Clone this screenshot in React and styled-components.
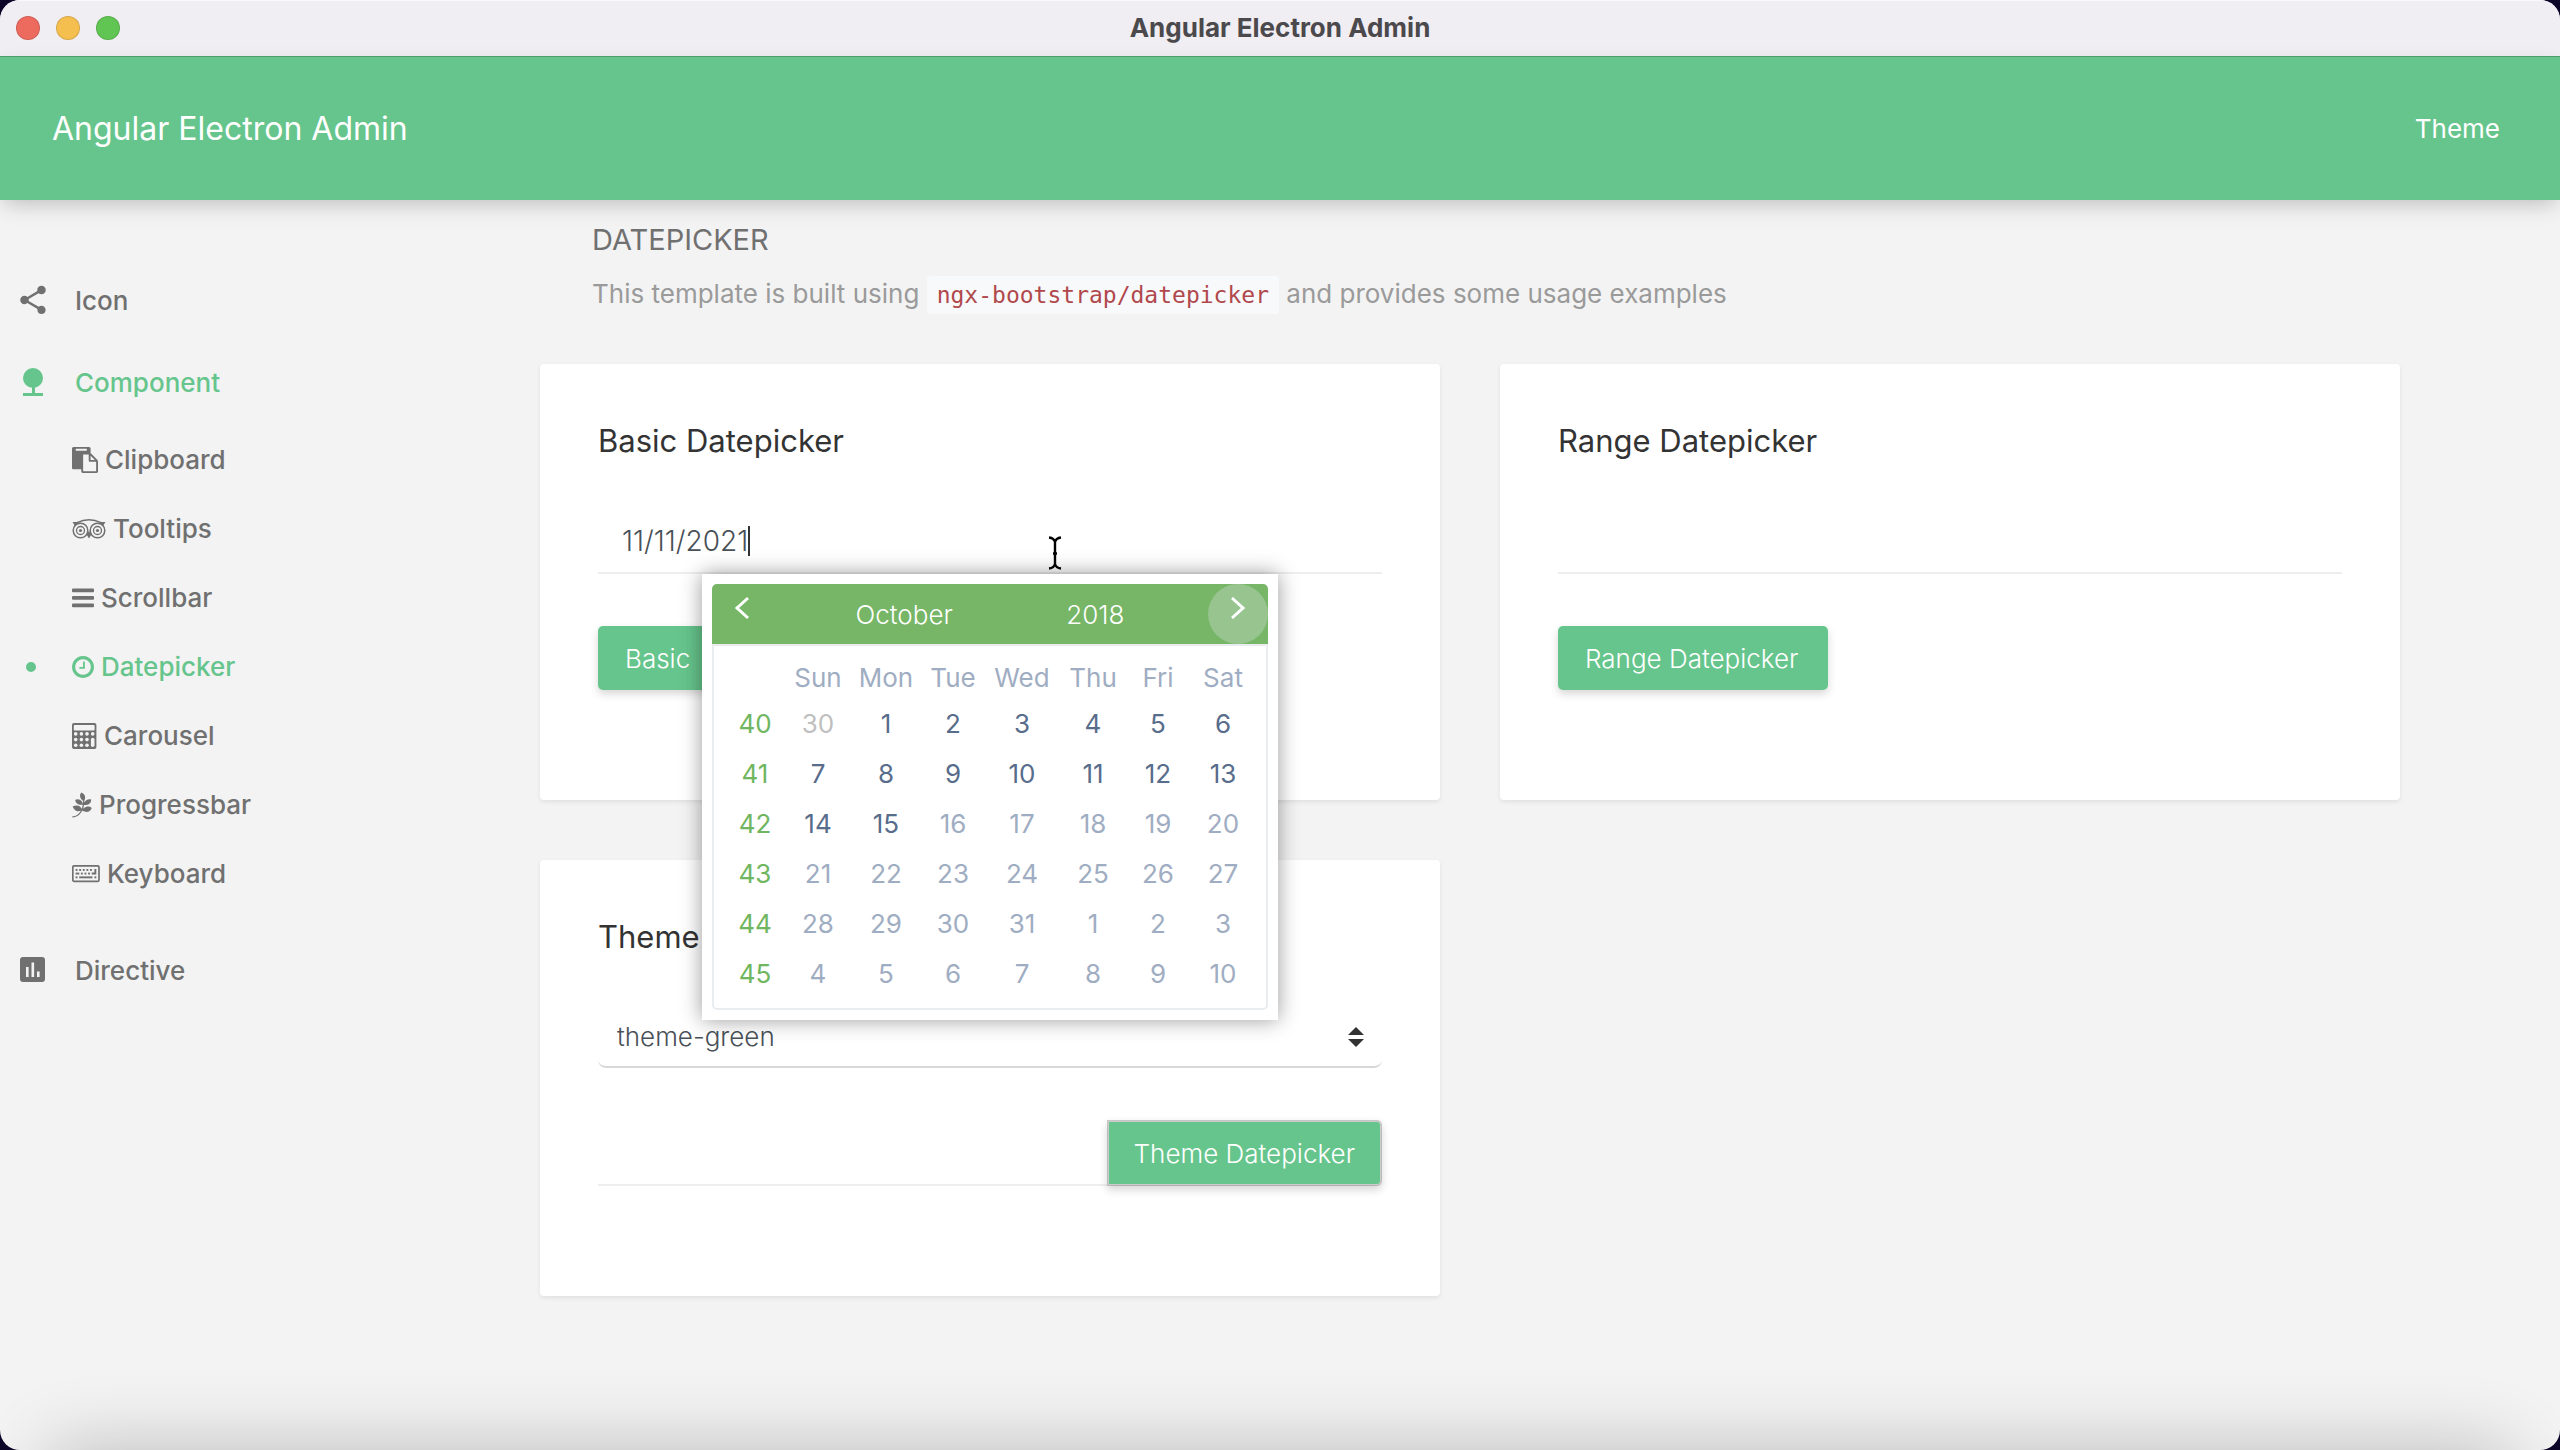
import React, { useState } from 'react';
//Styling
import styled, { createGlobalStyle } from 'styled-components';
//Icons
import { FaPagelines } from 'react-icons/fa';
import { MdShare } from 'react-icons/md';

//Data
const week = ['Sun', 'Mon', 'Tue', 'Wed', 'Thu', 'Fri', 'Sat'];
const colWidths = [62, 64, 72, 62, 76, 66, 64, 66];
const rows = [
    { no: 40, days: [30, 1, 2, 3, 4, 5, 6] },
    { no: 41, days: [7, 8, 9, 10, 11, 12, 13] },
    { no: 42, days: [14, 15, 16, 17, 18, 19, 20] },
    { no: 43, days: [21, 22, 23, 24, 25, 26, 27] },
    { no: 44, days: [28, 29, 30, 31, 1, 2, 3] },
    { no: 45, days: [4, 5, 6, 7, 8, 9, 10] },
];

//Converting a day to its state in the calendar
const getDayState = (row, day) => {
    if (row.no === 40 && day === 30) return 'other';
    if (row.no < 42 || (row.no === 42 && day <= 15)) return 'enabled';
    return 'disabled';
};

//Icons of the side menu
const NatureIcon = () => (
    <svg width="26" height="30" viewBox="0 0 26 30" fill="currentColor">
        <circle cx="13" cy="11" r="10" />
        <rect x="12" y="20" width="3" height="7" />
        <rect x="3" y="26" width="20" height="3" />
    </svg>
);
const ChartIcon = () => (
    <svg width="26" height="26" viewBox="0 0 26 26" fill="#f3f3f3">
        <rect width="25" height="25" rx="3" fill="currentColor" />
        <rect x="6" y="10" width="2.6" height="10" />
        <rect x="11.5" y="5.5" width="2.6" height="14.5" />
        <rect x="17" y="14.5" width="2.6" height="5.5" />
    </svg>
);
const PasteIcon = () => (
    <svg width="26" height="26" viewBox="0 0 1792 1792" fill="currentColor">
        <path d="M768 1664h896v-640h-416q-40 0-68-28t-28-68v-416h-384v1152zm256-1440v-64q0-13-9.5-22.5t-22.5-9.5h-704q-13 0-22.5 9.5t-9.5 22.5v64q0 13 9.5 22.5t22.5 9.5h704q13 0 22.5-9.5t9.5-22.5zm256 672h299l-299-299v299zm512 128v672q0 40-28 68t-68 28h-960q-40 0-68-28t-28-68v-160h-544q-40 0-68-28t-28-68v-1344q0-40 28-68t68-28h1088q40 0 68 28t28 68v328q21 13 36 28l408 408q28 28 48 76t20 88z" />
    </svg>
);
const OwlIcon = () => (
    <svg width="34" height="20" viewBox="0 0 34 20" fill="none" stroke="currentColor">
        <circle cx="8.5" cy="11.5" r="7.3" strokeWidth="1.5" />
        <circle cx="25.5" cy="11.5" r="7.3" strokeWidth="1.5" />
        <circle cx="8.5" cy="11.5" r="4" strokeWidth="1.3" />
        <circle cx="25.5" cy="11.5" r="4" strokeWidth="1.3" />
        <circle cx="8.5" cy="11.5" r="1.6" fill="currentColor" stroke="none" />
        <circle cx="25.5" cy="11.5" r="1.6" fill="currentColor" stroke="none" />
        <path d="M5 3.6Q17 -2 29 3.6" strokeWidth="1.4" />
        <path d="M0.5 3H7L3 7.5Q2 5 0.5 3ZM33.5 3H27L31 7.5Q32 5 33.5 3ZM14.6 15.5L17 12L19.4 15.5L17 19.5Z" fill="currentColor" stroke="none" />
    </svg>
);
const BarsIcon = () => (
    <svg width="22" height="20" viewBox="0 0 22 20" fill="currentColor">
        <rect y="0.5" width="22" height="3.8" rx="1" />
        <rect y="8" width="22" height="3.8" rx="1" />
        <rect y="15.5" width="22" height="3.8" rx="1" />
    </svg>
);
const ClockIcon = () => (
    <svg width="22" height="22" viewBox="128 128 1536 1536" fill="currentColor">
        <path d="M1024 544v448q0 14-9 23t-23 9h-320q-14 0-23-9t-9-23v-64q0-14 9-23t23-9h224v-352q0-14 9-23t23-9h64q14 0 23 9t9 23zm416 352q0-148-73-273t-198-198-273-73-273 73-198 198-73 273 73 273 198 198 273 73 273-73 198-198 73-273zm224 0q0 209-103 385.5t-279.5 279.5-385.5 103-385.5-103-279.5-279.5-103-385.5 103-385.5 279.5-279.5 385.5-103 385.5 103 279.5 279.5 103 385.5z" />
    </svg>
);
const CalculatorIcon = () => (
    <svg width="25" height="26" viewBox="0 0 25 26" fill="#f3f3f3">
        <rect width="24.4" height="26" rx="2" fill="currentColor" />
        <rect x="1.8" y="1.9" width="20.8" height="5.6" rx="0.8" />
        {[10.9, 16.6, 22.3].map((y) =>
            [3.7, 9.4, 15, 20.7].map((x) => (
                (x < 20 || y < 11) && <circle key={`${x} ${y}`} cx={x} cy={y} r="1.8" />
            ))
        )}
        <rect x="18.9" y="14.8" width="3.6" height="9.3" rx="1.8" />
    </svg>
);
const KeyboardIcon = () => (
    <svg width="28" height="18" viewBox="0 0 28 18" fill="currentColor">
        <rect x="0.8" y="0.8" width="26.2" height="15.6" rx="1.4" fill="none" stroke="currentColor" strokeWidth="1.7" />
        {[3.6, 7.2, 10.8, 14.4, 18].map((x) => (
            <rect key={x} x={x} y="4" width="1.9" height="1.9" />
        ))}
        {[8.9, 12.5, 16.1].map((x) => (
            <rect key={x} x={x} y="7.6" width="1.9" height="1.9" />
        ))}
        <rect x="3.6" y="7.6" width="3.7" height="1.9" />
        <path d="M22.4 4h1.9v5.5h-4.6V7.6h2.7z" />
        <rect x="3.6" y="11.4" width="1.9" height="1.9" />
        <rect x="7.2" y="11.4" width="13.2" height="1.9" />
        <rect x="22.4" y="11.4" width="1.9" height="1.9" />
    </svg>
);
const LeafIcon = () => (
    <LeafBox><FaPagelines size={26} /></LeafBox>
);

const Calendar = () => (
    <Popup>
        <PopupHead>
            <ArrowButton aria-label="Previous month">
                <svg width="16" height="24" viewBox="0 0 16 24"><path d="M14 2L3 12L14 22" /></svg>
            </ArrowButton>
            <HeadButton>October</HeadButton>
            <HeadButton>2018</HeadButton>
            <ArrowButton $hover aria-label="Next month">
                <svg width="16" height="24" viewBox="0 0 16 24"><path d="M2 2L13 12L2 22" /></svg>
            </ArrowButton>
        </PopupHead>
        <PopupBody>
            <Days>
                <colgroup>
                    {colWidths.map((w, i) => <col key={i} width={w} />)}
                </colgroup>
                <thead>
                    <tr>
                        <th></th>
                        {week.map((d) => <th key={d}>{d}</th>)}
                    </tr>
                </thead>
                <tbody>
                    {rows.map((row) => (
                        <tr key={row.no}>
                            <WeekNo>{row.no}</WeekNo>
                            {row.days.map((day) => (
                                <Day key={day} $state={getDayState(row, day)}>{day}</Day>
                            ))}
                        </tr>
                    ))}
                </tbody>
            </Days>
        </PopupBody>
    </Popup>
);

const App = () => {
    const [date, setDate] = useState('11/11/2021');
    const subItems = [
        { name: 'Clipboard', icon: <PasteIcon /> },
        { name: 'Tooltips', icon: <OwlIcon /> },
        { name: 'Scrollbar', icon: <BarsIcon /> },
        { name: 'Datepicker', icon: <ClockIcon />, active: true },
        { name: 'Carousel', icon: <CalculatorIcon /> },
        { name: 'Progressbar', icon: <LeafIcon /> },
        { name: 'Keyboard', icon: <KeyboardIcon /> },
    ];
    return (
        <>
            <GlobalStyle />
            <Window>
                <TitleBar>
                    <Lights>
                        <Light $color="#ed6a5e" />
                        <Light $color="#f4bf4f" />
                        <Light $color="#61c554" />
                    </Lights>
                    <WindowTitle>Angular Electron Admin</WindowTitle>
                </TitleBar>
                <Header>
                    <Brand href="#">Angular Electron Admin</Brand>
                    <HeaderLink href="#">Theme</HeaderLink>
                </Header>
                <Content>
                    <Sidebar>
                        <NavItem href="#"><NavIcon><MdShare size={34} /></NavIcon>Icon</NavItem>
                        <NavItem href="#" $active><NavIcon><NatureIcon /></NavIcon>Component</NavItem>
                        <SubMenu>
                            {subItems.map(({ name, icon, active }) => (
                                <li key={name}>
                                    <SubItem href="#" $active={active}>{icon}{name}</SubItem>
                                </li>
                            ))}
                        </SubMenu>
                        <NavItem href="#"><NavIcon><ChartIcon /></NavIcon>Directive</NavItem>
                    </Sidebar>
                    <Main>
                        <Intro>
                            <h1>DATEPICKER</h1>
                            <p>
                                This template is built using <code>ngx-bootstrap/datepicker</code> and provides some usage examples
                            </p>
                        </Intro>
                        <Cards>
                            <Card>
                                <h2>Basic Datepicker</h2>
                                <Field>
                                    <DateInput
                                        aria-label="Basic Datepicker"
                                        value={date}
                                        onChange={(e) => setDate(e.target.value)}
                                    />
                                    <Caret />
                                    <Cursor width="16" height="34" viewBox="0 0 16 34">
                                        <path className="edge" d="M2 1.5Q7 2 8 6Q9 2 14 1.5M8 5V29M2 32.5Q7 32 8 28Q9 32 14 32.5M6 17.5H10" />
                                        <path d="M2 1.5Q7 2 8 6Q9 2 14 1.5M8 5V29M2 32.5Q7 32 8 28Q9 32 14 32.5M6 17.5H10" />
                                    </Cursor>
                                    <Calendar />
                                </Field>
                                <Button>Basic</Button>
                            </Card>
                            <Card>
                                <h2>Range Datepicker</h2>
                                <Field>
                                    <DateInput aria-label="Range Datepicker" />
                                </Field>
                                <Button>Range Datepicker</Button>
                            </Card>
                            <Card>
                                <h2>Theme</h2>
                                <SelectBox>
                                    <select aria-label="Theme" defaultValue="theme-green">
                                        <option>theme-green</option>
                                        <option>theme-blue</option>
                                        <option>theme-red</option>
                                    </select>
                                    <svg width="16" height="20" viewBox="0 0 16 20"><path d="M8 0L16 8H0ZM8 20L0 12H16Z" /></svg>
                                </SelectBox>
                                <InputGroup>
                                    <DateInput aria-label="Theme Datepicker" />
                                    <Button $addon>Theme Datepicker</Button>
                                </InputGroup>
                            </Card>
                        </Cards>
                    </Main>
                </Content>
                <BottomShade />
            </Window>
        </>
    );
};

const GlobalStyle = createGlobalStyle`
*{
box-sizing:border-box;
margin:0;
padding:0;
}
body{
background:#0d0528;
font-family:Inter, "Liberation Sans", sans-serif;
font-size:26px;
color:#707070;
}
a{
color:inherit;
text-decoration:none;
}
ul{
list-style:none;
}
button, input, select{
font:inherit;
border:none;
background:none;
outline:none;
}
`;
const Window = styled.div`
min-height:100vh;
display:flex;
flex-direction:column;
background:#f3f3f3;
border-radius:20px;
overflow:hidden;
`;
const TitleBar = styled.div`
display:grid;
grid-template-columns:1fr auto 1fr;
align-items:center;
height:56px;
padding:0 16px 2px;
background:#f0edf3;
border-top:1px solid #f9f8fb;
`;
const Lights = styled.div`
display:flex;
gap:16px;
`;
const Light = styled.span`
width:24px;
height:24px;
border-radius:50%;
background:${({ $color }) => $color};
border:1px solid rgba(0,0,0,0.12);
`;
const WindowTitle = styled.div`
font-size:26px;
font-weight:700;
color:#4b494c;
`;
const Header = styled.header`
display:flex;
align-items:center;
justify-content:space-between;
height:144px;
padding:0 60px 0 52px;
background:#66c58c;
border-top:1px solid #4d9c6c;
color:white;
box-shadow:0 8px 20px -4px rgba(0,0,0,0.22);
`;
const Brand = styled.a`
font-size:32px;
`;
const HeaderLink = styled.a`
font-size:26px;
`;
const Content = styled.div`
display:flex;
flex:1;
`;
const Sidebar = styled.nav`
width:380px;
padding-top:59px;
font-weight:500;
`;
const NavItem = styled.a`
display:flex;
align-items:center;
height:82px;
color:${({ $active }) => ($active ? '#66c58c' : '#707070')};
`;
const NavIcon = styled.span`
display:flex;
justify-content:center;
width:65px;
margin-right:10px;
`;
const SubMenu = styled.ul`
padding:2px 0 21px;
`;
const SubItem = styled.a`
position:relative;
display:flex;
align-items:center;
gap:7px;
height:69px;
padding-left:72px;
color:${({ $active }) => ($active ? '#66c58c' : '#707070')};
&::before{
content:'';
display:${({ $active }) => ($active ? 'block' : 'none')};
position:absolute;
left:26px;
width:10px;
height:10px;
border-radius:50%;
background:#66c58c;
}
`;
const LeafBox = styled.span`
display:flex;
justify-content:center;
width:20px;
svg{
flex-shrink:0;
}
`;
const Main = styled.main`
flex:1;
padding:20px 160px 60px;
`;
const Intro = styled.div`
padding-left:52px;
margin-bottom:50px;
line-height:40px;
h1{
font-size:29px;
font-weight:400;
color:#707070;
margin-bottom:14px;
}
p{
color:#9a9a9a;
}
code{
font-family:"DejaVu Sans Mono", monospace;
font-size:23px;
line-height:30px;
padding:6px 10px;
border-radius:4px;
background:#f8f9fb;
color:#b0484c;
}
`;
const Cards = styled.div`
display:grid;
grid-template-columns:1fr 1fr;
gap:60px;
`;
const Card = styled.section`
padding:58px 58px 110px;
background:white;
border-radius:4px;
box-shadow:0 2px 4px rgba(0,0,0,0.08);
h2{
font-size:31px;
font-weight:400;
line-height:38px;
color:#333;
margin-bottom:50px;
}
`;
const Field = styled.div`
position:relative;
margin-bottom:52px;
`;
const DateInput = styled.input`
display:block;
width:100%;
min-width:0;
height:64px;
padding:0 24px;
border-bottom:2px solid #eee;
color:#495057;
font-size:28px;
font-weight:300;
`;
const Caret = styled.span`
position:absolute;
left:150px;
top:16px;
width:2px;
height:30px;
background:#333;
`;
const Cursor = styled.svg`
position:absolute;
left:449px;
top:26px;
fill:none;
stroke:black;
stroke-width:2.4;
.edge{
stroke:white;
stroke-width:5;
}
`;
const Button = styled.button`
flex:none;
height:64px;
min-width:270px;
padding:0 27px;
border-radius:5px;
background:#66c58c;
color:white;
font-weight:300;
text-align:left;
white-space:nowrap;
box-shadow:0 4px 8px rgba(0,0,0,0.16);
${({ $addon }) => $addon && `
height:66px;
padding:0 25px;
border:2px solid rgba(0,0,0,0.2);
border-radius:0 5px 5px 0;
background-clip:padding-box;
`}
`;
const SelectBox = styled.div`
display:grid;
align-items:center;
margin-bottom:52px;
select{
grid-area:1 / 1;
appearance:none;
height:62px;
padding:0 19px;
border-bottom:2px solid #d8d8d8;
border-radius:8px;
color:#495057;
font-weight:300;
}
svg{
grid-area:1 / 1;
justify-self:end;
margin-right:18px;
fill:#333;
pointer-events:none;
}
`;
const InputGroup = styled.div`
display:flex;
align-items:flex-end;
`;
const Popup = styled.div`
position:absolute;
top:100%;
left:104px;
z-index:10;
width:576px;
padding:10px;
background:white;
box-shadow:0 0 20px rgba(0,0,0,0.4);
`;
const PopupHead = styled.div`
display:flex;
justify-content:space-between;
height:60px;
border-radius:5px 5px 0 0;
background:#76b666;
`;
const HeadButton = styled.button`
padding:0 30px;
color:white;
font-weight:300;
`;
const ArrowButton = styled.button`
display:flex;
justify-content:center;
width:60px;
padding-top:12px;
border-radius:50%;
background:${({ $hover }) => ($hover ? '#97c48f' : 'transparent')};
svg{
fill:none;
stroke:white;
stroke-width:3;
}
`;
const PopupBody = styled.div`
padding:10px;
border:2px solid #e9edf0;
border-radius:0 0 5px 5px;
`;
const Days = styled.table`
width:100%;
table-layout:fixed;
border-collapse:collapse;
text-align:center;
th{
height:42px;
font-weight:400;
color:#9fadc2;
}
td{
height:50px;
}
`;
const WeekNo = styled.td`
color:#6fb65f;
`;
const dayColors = {
    enabled: '#586c8b',
    disabled: '#9fadc2',
    other: '#bfbfbf',
};
const Day = styled.td`
color:${({ $state }) => dayColors[$state]};
`;
//Soft shade along the lower edge of the window
const BottomShade = styled.div`
height:120px;
margin:0 50px -120px;
box-shadow:0 0 75px rgba(0,0,0,0.24);
`;
export default App;
